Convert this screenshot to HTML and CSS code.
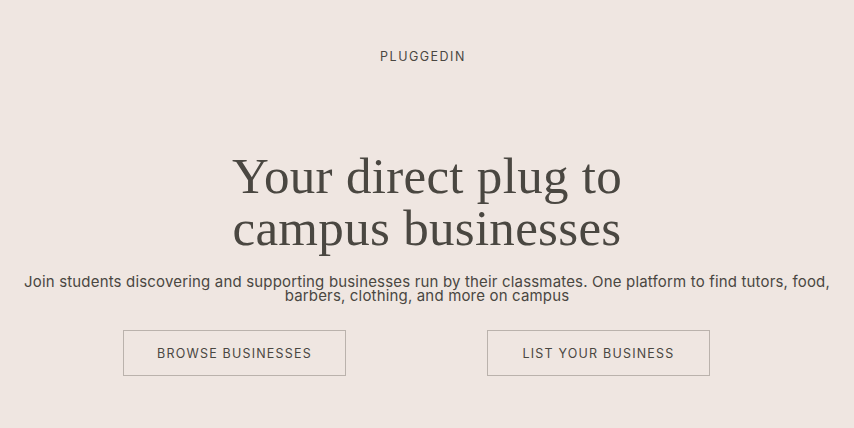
FILE: index.html
```html
<!DOCTYPE html>
<html lang="en">
<head>
<meta charset="utf-8">
<title>PluggedIn</title>
<link rel="stylesheet" href="styles.css">
</head>
<body>
<header class="top">
  <div class="brand">PLUGGEDIN</div>
</header>
<main class="hero">
  <h1 class="title">Your direct plug to<br>campus businesses</h1>
  <p class="lead">Join students discovering and supporting businesses run by their classmates. One platform to find tutors, food, barbers, clothing, and more on campus</p>
  <div class="actions">
    <a class="btn" href="#">BROWSE BUSINESSES</a>
    <a class="btn" href="#">LIST YOUR BUSINESS</a>
  </div>
</main>
</body>
</html>
```
FILE: styles.css
```css
html, body {
  margin: 0;
  padding: 0;
}
body {
  background: #efe6e1;
  color: #4a4741;
  font-family: Inter, "Liberation Sans", sans-serif;
  width: 854px;
  height: 428px;
  overflow: hidden;
}
.top {
  display: flex;
  justify-content: center;
  padding-top: 49px;
}
.brand {
  font-size: 12.5px;
  letter-spacing: 1.5px;
  line-height: 16px;
  color: #4a4741;
  padding-right: 8px;
}
.hero {
  display: flex;
  flex-direction: column;
  align-items: center;
  padding-top: 85px;
}
.title {
  margin: 0;
  font-family: "Liberation Serif", serif;
  font-weight: 400;
  font-size: 51px;
  letter-spacing: 0.3px;
  line-height: 52px;
  text-align: center;
  color: #4a4741;
}
.lead {
  margin: 21px 0 0;
  width: 830px;
  font-size: 15px;
  letter-spacing: 0.17px;
  line-height: 14px;
  text-align: center;
  color: #4a4741;
}
.actions {
  display: flex;
  gap: 141px;
  margin-top: 27px;
  padding-right: 21px;
}
.btn {
  display: flex;
  align-items: center;
  justify-content: center;
  width: 221px;
  height: 44px;
  border: 1px solid #bab2ac;
  font-size: 12.5px;
  letter-spacing: 1.2px;
  color: #4a4741;
  text-decoration: none;
}
```
